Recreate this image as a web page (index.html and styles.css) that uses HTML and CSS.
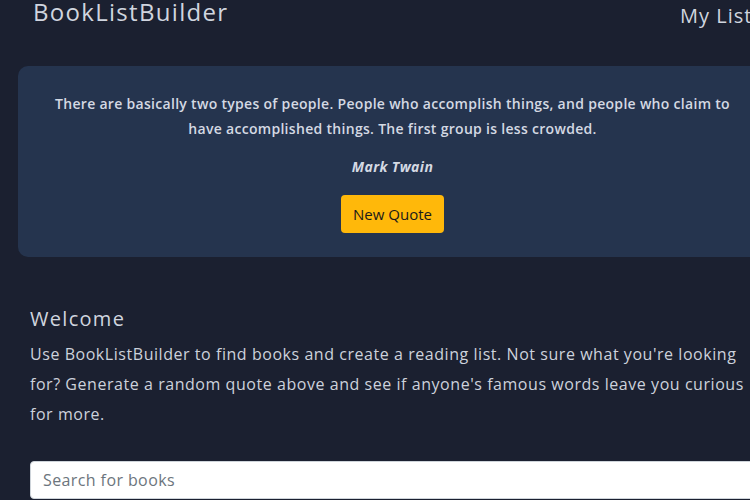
FILE: index.html
```html
<!DOCTYPE html>
<html lang="en">
<head>
<meta charset="utf-8">
<title>BookListBuilder</title>
<link rel="stylesheet" href="styles.css">
</head>
<body>
<div class="page">
  <header class="topbar">
    <span class="brand">BookListBuilder</span>
    <a class="nav-link" href="#">My List</a>
  </header>
  <main class="main">
    <section class="quote-card">
      <p class="quote-text">There are basically two types of people. People who accomplish things, and people who claim to have accomplished things. The first group is less crowded.</p>
      <p class="quote-author">Mark Twain</p>
      <button class="quote-btn" type="button">New Quote</button>
    </section>
    <section class="welcome">
      <h2 class="welcome-title">Welcome</h2>
      <p class="welcome-text">Use BookListBuilder to find books and create a reading list. Not sure what you're looking for? Generate a random quote above and see if anyone's famous words leave you curious for more.</p>
      <input class="search" type="text" placeholder="Search for books">
    </section>
  </main>
</div>
</body>
</html>
```
FILE: styles.css
```css
html, body {
  margin: 0;
  padding: 0;
  background: #1b2030;
  overflow-x: hidden;
}
.page {
  width: 785px;
  font-family: "Open Sans", sans-serif;
  color: #d0d5df;
}
.topbar {
  display: flex;
  justify-content: space-between;
  align-items: flex-start;
  padding: 1px 0 0 33px;
  height: 47px;
}
.brand {
  font-size: 24px;
  line-height: 21px;
  letter-spacing: 1.3px;
  color: #d0d5df;
}
.nav-link {
  font-size: 20px;
  line-height: 20px;
  padding-top: 5px;
  letter-spacing: 1px;
  color: #d0d5df;
  text-decoration: none;
  margin-left: auto;
  margin-right: 30px;
  width: 75px;
}
.main {
  padding: 0 18px;
  margin-top: 18px;
}
.quote-card {
  background: #25344e;
  border-radius: 10px;
  padding: 25px 30px 24px;
  display: flex;
  flex-direction: column;
  align-items: center;
  text-align: center;
}
.quote-text {
  margin: 0;
  font-size: 14px;
  line-height: 25px;
  font-weight: 600;
  letter-spacing: 0.3px;
  color: #d4d9e3;
}
.quote-author {
  margin: 13px 0 0;
  font-size: 14px;
  line-height: 25px;
  font-weight: 700;
  font-style: italic;
  letter-spacing: 0.4px;
  color: #d4d9e3;
}
.quote-btn {
  margin-top: 16px;
  height: 38px;
  padding: 0 12px;
  border: none;
  border-radius: 4px;
  background: #ffb80a;
  color: #1a1a1a;
  font-family: "Open Sans", sans-serif;
  font-size: 15px;
}
.welcome {
  padding: 50px 12px 0;
}
.welcome-title {
  margin: 0;
  font-size: 20px;
  line-height: 24px;
  font-weight: 400;
  letter-spacing: 1.3px;
  color: #d0d5df;
}
.welcome-text {
  margin: 8px 0 0;
  font-size: 16px;
  line-height: 30px;
  letter-spacing: 0.55px;
  color: #cdd2dc;
  width: 714px;
}
.search {
  display: block;
  margin-top: 32px;
  box-sizing: border-box;
  width: 100%;
  height: 38px;
  padding: 0 12px;
  border: 1px solid #ced4da;
  border-radius: 4px;
  background: #fff;
  font-family: "Open Sans", sans-serif;
  font-size: 16px;
  letter-spacing: 0.4px;
  color: #495057;
}
.search::placeholder {
  color: #6c757d;
}
```
